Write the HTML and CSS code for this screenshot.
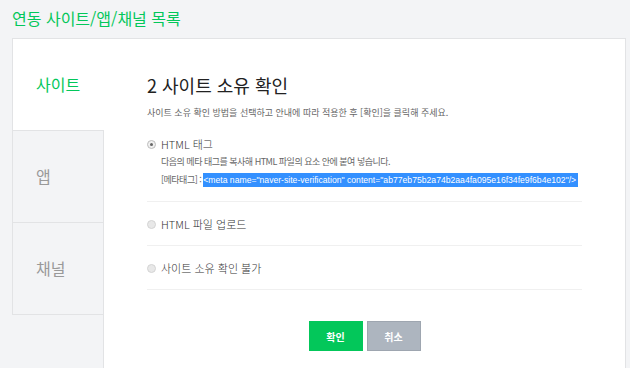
FILE: index.html
```html
<!DOCTYPE html>
<html lang="ko">
<head>
    <meta charset="UTF-8">
    <meta name="viewport" content="width=device-width, initial-scale=1.0">
    <title>연동 사이트/앱/채널 목록</title>
    <link rel="stylesheet" href="styles.css">
</head>
<body>
    <h1 class="page-title">연동 사이트/앱/채널 목록</h1>

    <div class="panel">
        <ul class="side-tabs">
            <li class="side-tab active">사이트</li>
            <li class="side-tab">앱</li>
            <li class="side-tab">채널</li>
        </ul>

        <div class="panel-body">
            <h2 class="step-title">2 사이트 소유 확인</h2>
            <p class="step-desc">사이트 소유 확인 방법을 선택하고 안내에 따라 적용한 후 [확인]을 클릭해 주세요.</p>

            <div class="option">
                <label class="option-label"><span class="radio checked"></span>HTML 태그</label>
                <div class="option-info">
                    <p>다음의 메타 태그를 복사해 HTML 파일의 요소 안에 붙여 넣습니다.</p>
                    <p>[메타태그] : <span class="meta-code">&lt;meta name="naver-site-verification" content="ab77eb75b2a74b2aa4fa095e16f34fe9f6b4e102"/&gt;</span></p>
                </div>
            </div>

            <div class="option">
                <label class="option-label"><span class="radio"></span>HTML 파일 업로드</label>
            </div>

            <div class="option">
                <label class="option-label"><span class="radio"></span>사이트 소유 확인 불가</label>
            </div>

            <div class="actions">
                <button class="btn btn-ok">확인</button>
                <button class="btn btn-cancel">취소</button>
            </div>
        </div>
    </div>
</body>
</html>
```

FILE: styles.css
```css
body {
    font-family: "Noto Sans CJK KR", "Noto Sans", sans-serif;
    margin: 0;
    padding: 0;
    background-color: #f3f4f6;
    color: #333;
    min-height: 368px;
}

.page-title {
    margin: 0;
    height: 38px;
    padding: 0 12px;
    font-size: 16px;
    font-weight: normal;
    line-height: 36px;
    color: #03c75a;
}

.panel {
    display: flex;
    margin-left: 12px;
    width: 613px;
    min-height: 329px;
    background: white;
    border-top: 1px solid #e2e3e5;
    border-right: 1px solid #e2e3e5;
}

.side-tabs {
    list-style: none;
    margin: 0;
    padding: 0;
    width: 91px;
    flex-shrink: 0;
    background: #f3f4f6;
    border-right: 1px solid #e2e3e5;
}

.side-tab {
    height: 91px;
    padding-left: 23px;
    line-height: 91px;
    font-size: 16px;
    color: #999;
    border-left: 1px solid #e2e3e5;
    border-bottom: 1px solid #e2e3e5;
}

.side-tab.active {
    background: white;
    color: #03c75a;
    margin-right: -1px;
    line-height: 90px;
}

.panel-body {
    flex: 1;
    min-width: 0;
    padding: 33px 43px 0 43px;
}

.step-title {
    margin: 0;
    font-size: 18px;
    font-weight: normal;
    line-height: 26px;
    color: #222;
}

.step-desc {
    margin: 7px 0 1px;
    font-size: 9px;
    line-height: 16px;
    color: #666;
}

.option {
    padding: 13px 0 12px;
    border-bottom: 1px solid #f0f0f0;
}

.option-label {
    display: flex;
    align-items: center;
    font-size: 11px;
    font-weight: 300;
    line-height: 18px;
    color: #333;
}

.radio {
    width: 7px;
    height: 7px;
    margin: 0 5px 0 0;
    border: 1px solid #d4d4d4;
    border-radius: 50%;
    background: #e8e8e8;
    box-sizing: content-box;
    position: relative;
}

.radio.checked {
    border-color: #bdbdbd;
    background: #f0f0f0;
}

.radio.checked::after {
    content: "";
    position: absolute;
    left: 2px;
    top: 2px;
    width: 3px;
    height: 3px;
    border-radius: 50%;
    background: #666;
}

.option-info {
    padding-left: 14px;
}

.option-info p {
    margin: 0;
    font-size: 9px;
    letter-spacing: -0.5px;
    line-height: 18px;
    color: #666;
    white-space: nowrap;
}

.meta-code {
    background: #3390ff;
    color: white;
    padding: 2px 2px 2px 0;
    font-family: "Liberation Sans", sans-serif;
    font-size: 8.65px;
    letter-spacing: 0;
}

.actions {
    display: flex;
    justify-content: center;
    gap: 4px;
    margin-top: 31px;
}

.btn {
    width: 54px;
    height: 30px;
    border: none;
    font-family: inherit;
    font-size: 10px;
    font-weight: bold;
    color: white;
    cursor: pointer;
}

.btn-ok {
    background: #03c75a;
}

.btn-cancel {
    background: #adb5bf;
    border: 1px solid #9ea6b0;
}
```
